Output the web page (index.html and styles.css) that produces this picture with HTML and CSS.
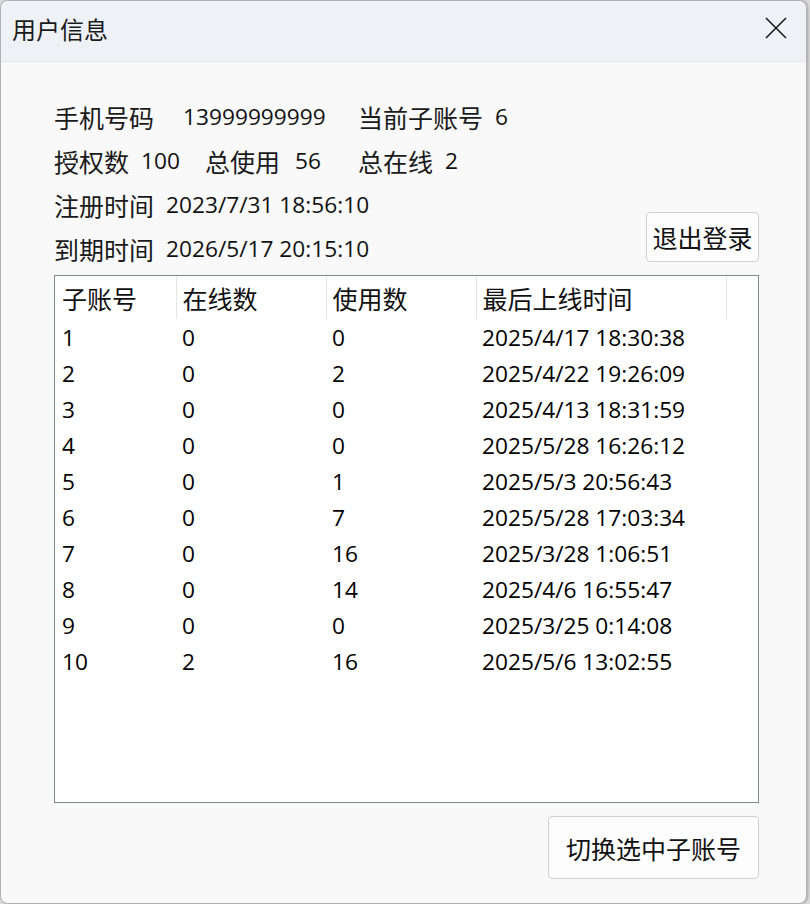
FILE: index.html
```html
<!DOCTYPE html>
<html lang="zh-CN">
<head>
  <meta charset="UTF-8">
  <title>用户信息</title>
  <link rel="stylesheet" href="styles.css">
</head>
<body>
  <div class="window">
    <!-- Title bar -->
    <div class="title-bar">
      <span class="title">用户信息</span>
      <span class="close" title="关闭">
        <svg width="22" height="22" viewBox="0 0 22 22">
          <path d="M1 1 L21 21 M21 1 L1 21" stroke="#1b1b1b" stroke-width="1.6" fill="none"/>
        </svg>
      </span>
    </div>

    <div class="content">
      <!-- Account info -->
      <div class="info">
        <div class="rows">
          <div class="row">
            <div class="field phone"><span class="label">手机号码</span><span class="value">13999999999</span></div>
            <div class="field"><span class="label">当前子账号</span><span class="value">6</span></div>
          </div>
          <div class="row">
            <div class="field auth"><span class="label">授权数</span><span class="value">100</span></div>
            <div class="field used"><span class="label">总使用</span><span class="value">56</span></div>
            <div class="field"><span class="label">总在线</span><span class="value">2</span></div>
          </div>
          <div class="row">
            <div class="field"><span class="label">注册时间</span><span class="value">2023/7/31 18:56:10</span></div>
          </div>
          <div class="row">
            <div class="field"><span class="label">到期时间</span><span class="value">2026/5/17 20:15:10</span></div>
          </div>
        </div>
        <button class="btn logout">退出登录</button>
      </div>

      <!-- Sub accounts -->
      <div class="list">
        <table>
          <colgroup>
            <col style="width:121px">
            <col style="width:150px">
            <col style="width:150px">
            <col style="width:250px">
            <col>
          </colgroup>
          <thead>
            <tr>
              <th>子账号</th>
              <th>在线数</th>
              <th>使用数</th>
              <th>最后上线时间</th>
              <th class="filler"></th>
            </tr>
          </thead>
          <tbody>
            <tr><td>1</td><td>0</td><td>0</td><td>2025/4/17 18:30:38</td><td></td></tr>
            <tr><td>2</td><td>0</td><td>2</td><td>2025/4/22 19:26:09</td><td></td></tr>
            <tr><td>3</td><td>0</td><td>0</td><td>2025/4/13 18:31:59</td><td></td></tr>
            <tr><td>4</td><td>0</td><td>0</td><td>2025/5/28 16:26:12</td><td></td></tr>
            <tr><td>5</td><td>0</td><td>1</td><td>2025/5/3 20:56:43</td><td></td></tr>
            <tr><td>6</td><td>0</td><td>7</td><td>2025/5/28 17:03:34</td><td></td></tr>
            <tr><td>7</td><td>0</td><td>16</td><td>2025/3/28 1:06:51</td><td></td></tr>
            <tr><td>8</td><td>0</td><td>14</td><td>2025/4/6 16:55:47</td><td></td></tr>
            <tr><td>9</td><td>0</td><td>0</td><td>2025/3/25 0:14:08</td><td></td></tr>
            <tr><td>10</td><td>2</td><td>16</td><td>2025/5/6 13:02:55</td><td></td></tr>
          </tbody>
        </table>
      </div>

      <div class="footer">
        <button class="btn switch">切换选中子账号</button>
      </div>
    </div>
  </div>
</body>
</html>
```

FILE: styles.css
```css
/* Reset */
* {
  margin: 0;
  padding: 0;
  box-sizing: border-box;
}

body {
  font-family: "Open Sans", "Noto Sans CJK SC", sans-serif;
  font-size: 22.7px;
  color: #111;
  background-color: #dcdcdc;
  width: 810px;
  height: 904px;
  overflow: hidden;
}

/* Window frame */
.window {
  width: 807px;
  height: 904px;
  border: 1px solid #b0b0b0;
  border-radius: 8px;
  background-color: #f9f9f9;
  overflow: hidden;
  display: flex;
  flex-direction: column;
  box-shadow: 1px 0 3px rgba(0, 0, 0, 0.25);
}

/* Title bar */
.title-bar {
  height: 61px;
  flex-shrink: 0;
  background-color: #eef2f7;
  border-bottom: 1px solid #e4e6e9;
  display: flex;
  align-items: center;
  justify-content: space-between;
  padding: 0 19px 0 11px;
}

.title {
  font-size: 24px;
  color: #1a1a1a;
  margin-top: -6px;
}

.close {
  display: flex;
  margin-top: -6px;
}

/* Content */
.content {
  flex: 1;
  padding: 0 47px 0 53px;
  display: flex;
  flex-direction: column;
}

.info {
  display: flex;
  justify-content: space-between;
  padding-top: 33px;
}

.row {
  display: flex;
  height: 44px;
  align-items: center;
}

.label {
  font-size: 25px;
  color: #1a1a1a;
}

.value {
  margin-top: -1px;
}

.field {
  display: flex;
  align-items: center;
  gap: 12px;
}

.field.phone {
  width: 304px;
  gap: 29px;
}

.field.auth {
  width: 151px;
}

.field.used {
  width: 153px;
  gap: 15px;
}

.btn {
  font-family: "Open Sans", "Noto Sans CJK SC", sans-serif;
  font-size: 25px;
  color: #111;
  background-color: #fdfdfd;
  border: 1px solid #d0d0d0;
  border-radius: 4px;
}

.logout {
  align-self: flex-end;
  width: 113px;
  height: 50px;
  margin-bottom: 9px;
}

/* Sub account list */
.list {
  margin-top: 4px;
  height: 528px;
  border: 1px solid #838790;
  background-color: #fff;
  overflow: hidden;
}

table {
  width: 100%;
  border-collapse: collapse;
  table-layout: fixed;
}

th {
  font-size: 25px;
  font-weight: normal;
  text-align: left;
  height: 43px;
  padding: 0 6px;
  color: #111;
  border-right: 1px solid #e5e5e5;
}

th:first-child {
  padding-left: 7px;
}

th.filler {
  border-right: none;
}

td {
  height: 36px;
  padding: 0 6px;
  white-space: nowrap;
  color: #000;
}

td:first-child {
  padding-left: 7px;
}

/* Footer */
.footer {
  display: flex;
  justify-content: flex-end;
  padding-top: 13px;
}

.switch {
  width: 211px;
  height: 63px;
}
```
